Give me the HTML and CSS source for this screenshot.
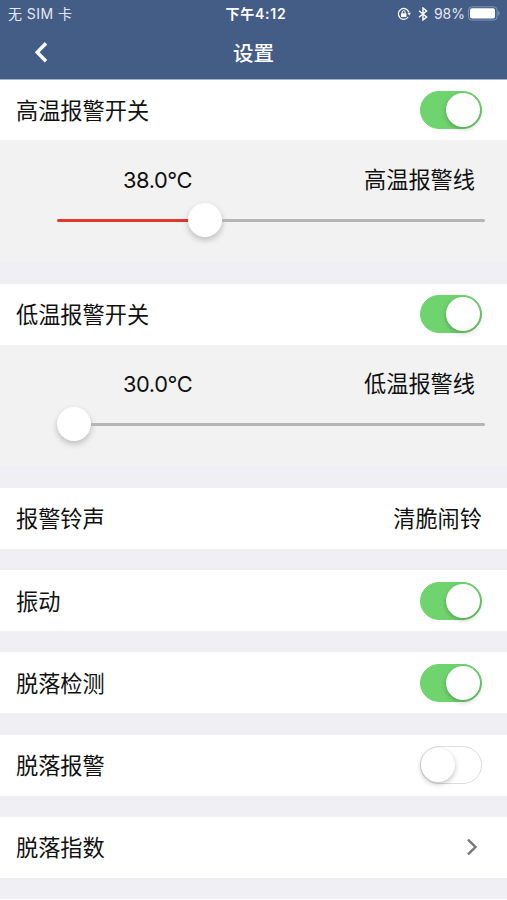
FILE: index.html
```html
<!DOCTYPE html>
<html lang="zh-CN">
<head>
    <meta charset="UTF-8">
    <meta name="viewport" content="width=device-width, initial-scale=1.0">
    <title>设置</title>
    <link rel="stylesheet" href="styles.css">
</head>
<body>
<header class="header">
    <div class="status-bar">
        <span class="carrier">无 SIM 卡</span>
        <span class="time">下午4:12</span>
        <div class="status-icons">
            <svg class="lock-icon" width="14" height="14" viewBox="0 0 14 14" fill="none" stroke="#fff">
                <path d="M11.2 10A5.4 5.4 0 1 1 11.9 5.2" stroke-width="1.2"/>
                <path d="M10.4 5.8h3.6l-1.8 2.7z" fill="#fff" stroke="none"/>
                <rect x="4" y="6.2" width="5.4" height="3.9" rx=".4" fill="#fff" stroke="none"/>
                <path d="M5.2 6.4V5.2a1.5 1.5 0 0 1 3 0v1.2" stroke-width="1"/>
            </svg>
            <svg class="bluetooth-icon" width="10" height="14" viewBox="0 0 10 14" fill="none" stroke="#fff" stroke-width="1.4">
                <path d="M1 3.8l7.6 6.2L5 13V1l3.6 3L1 10.2"/>
            </svg>
            <span class="percent">98%</span>
            <svg class="battery-icon" width="32" height="15" viewBox="0 0 32 15">
                <rect x=".5" y=".8" width="28.6" height="13.2" rx="3.2" fill="none" stroke="#8195b7"/>
                <rect x="2" y="2.3" width="25" height="10.2" rx="1.8" fill="#fff"/>
                <path d="M30.2 5v4.8c1.8-.7 1.8-4.1 0-4.8z" fill="#8195b7"/>
            </svg>
        </div>
    </div>
    <nav class="nav-bar">
        <svg class="back-icon" width="14" height="22" viewBox="0 0 14 22" fill="none" stroke="#fff" stroke-width="3.4">
            <path d="M12 1.3L3.2 10.3l8.8 9"/>
        </svg>
        <h1 class="title">设置</h1>
    </nav>
</header>

<main class="settings">
    <!-- High temperature alarm -->
    <section class="group">
        <div class="row first">
            <span>高温报警开关</span>
            <div class="switch on"><div class="knob"></div></div>
        </div>
        <div class="panel">
            <div class="panel-labels">
                <span class="degree">38.0°C</span>
                <span>高温报警线</span>
            </div>
            <div class="slider">
                <div class="fill" style="width: 131px"></div>
                <div class="thumb"></div>
                <div class="track"></div>
            </div>
        </div>
    </section>

    <!-- Low temperature alarm -->
    <section class="group">
        <div class="row">
            <span>低温报警开关</span>
            <div class="switch on"><div class="knob"></div></div>
        </div>
        <div class="panel">
            <div class="panel-labels">
                <span class="degree">30.0°C</span>
                <span>低温报警线</span>
            </div>
            <div class="slider">
                <div class="fill" style="width: 0"></div>
                <div class="thumb"></div>
                <div class="track"></div>
            </div>
        </div>
    </section>

    <div class="row">
        <span>报警铃声</span>
        <span>清脆闹铃</span>
    </div>
    <div class="row">
        <span>振动</span>
        <div class="switch on"><div class="knob"></div></div>
    </div>
    <div class="row">
        <span>脱落检测</span>
        <div class="switch on"><div class="knob"></div></div>
    </div>
    <div class="row">
        <span>脱落报警</span>
        <div class="switch"><div class="knob"></div></div>
    </div>
    <div class="row">
        <span>脱落指数</span>
        <svg class="arrow-icon" width="12" height="18" viewBox="0 0 12 18" fill="none" stroke="#777" stroke-width="2.4">
            <path d="M2 1.6L9.5 9 2 16.4"/>
        </svg>
    </div>
    <div class="row last"></div>
</main>
</body>
</html>
```

FILE: styles.css
```css
* {
    box-sizing: border-box;
}

body {
    display: flex;
    flex-direction: column;
    margin: 0;
    height: 100vh;
    background-color: #efeff4;
    color: #111;
    font-family: Inter, "Noto Sans CJK SC", sans-serif;
    font-size: 22.2px;
    line-height: 30px;
}

.header {
    flex-shrink: 0;
    height: 80px;
    border-bottom: 1px solid #a3b2cb;
    background-color: #445d87;
    color: #fff;
}

.status-bar {
    display: grid;
    grid-template-columns: 1fr auto 1fr;
    align-items: center;
    height: 27px;
    padding: 0 7px 0 8px;
    font-size: 14px;
    line-height: 27px;
}

.carrier {
    color: #e3e9f2;
    letter-spacing: 0.45px;
}

.time {
    padding-left: 4px;
    font-size: 14px;
    font-weight: 600;
    letter-spacing: 0.75px;
}

.status-icons {
    display: flex;
    align-items: center;
    justify-content: flex-end;
}

.lock-icon {
    margin-right: 7px;
}

.bluetooth-icon {
    margin-right: 6px;
}

.percent {
    margin-right: 3px;
    color: #e3e9f2;
}

.nav-bar {
    display: grid;
    grid-template-columns: 1fr auto 1fr;
    align-items: center;
    height: 52px;
    padding: 0 34px;
}

.title {
    margin: 0;
    padding-top: 2px;
    font-size: 20.5px;
    font-weight: 500;
    line-height: 30px;
}

.settings {
    display: flex;
    flex: 1;
    flex-direction: column;
    gap: 21.2px;
    min-height: 0;
}

.row {
    display: flex;
    flex-shrink: 0;
    align-items: center;
    justify-content: space-between;
    height: 61px;
    padding: 0 25px 0 16px;
    background-color: #fff;
}

.row span {
    padding-top: 2px;
}

.row.first {
    height: 60.4px;
}

.row.first .switch {
    margin-bottom: 1px;
}

.row.last {
    flex: 1;
    height: auto;
}

.panel {
    height: 122.1px;
    padding-top: 24.5px;
    background-color: #f2f2f2;
}

.panel-labels {
    display: flex;
    justify-content: space-between;
    padding: 0 32px 0 123px;
}

.degree {
    font-size: 21.8px;
    letter-spacing: -0.4px;
}

.slider {
    display: flex;
    align-items: center;
    height: 34px;
    margin: 8.2px 22px 0 57px;
}

.fill {
    height: 3px;
    border-radius: 2px 0 0 2px;
    background-color: #e2382f;
}

.thumb {
    flex-shrink: 0;
    width: 34px;
    height: 34px;
    border-radius: 50%;
    background-color: #fff;
    box-shadow: 0 3px 6px rgba(0, 0, 0, 0.22);
}

.track {
    flex: 1;
    height: 3px;
    border-radius: 0 2px 2px 0;
    background-color: #b5b5b5;
}

.switch {
    display: flex;
    align-items: center;
    width: 62px;
    height: 38px;
    border: 1.5px solid #dedede;
    border-radius: 19px;
    background-color: #fff;
}

.switch.on {
    justify-content: flex-end;
    padding-right: 1px;
    border-color: #70d46e;
    background-color: #70d46e;
}

.knob {
    width: 34px;
    height: 34px;
    border-radius: 50%;
    background-color: #fff;
    box-shadow: 0 2px 5px rgba(0, 0, 0, 0.25);
}

.arrow-icon {
    margin-right: 4px;
}
```
